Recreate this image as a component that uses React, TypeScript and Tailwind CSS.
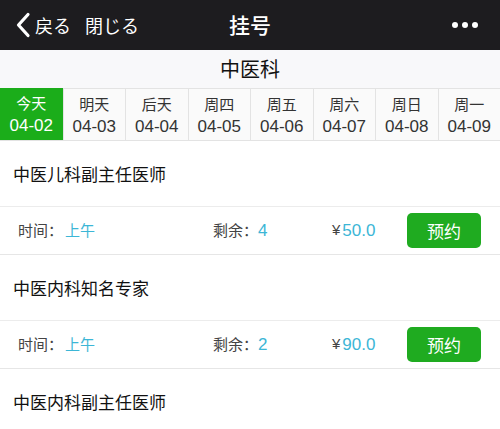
import React from 'react';

const font = { fontFamily: '"Noto Sans CJK SC", "Noto Sans CJK JP", "Noto Sans", sans-serif' };
const latin = { fontFamily: '"Liberation Sans", sans-serif' };

const days = [
  { label: '今天', date: '04-02' },
  { label: '明天', date: '04-03' },
  { label: '后天', date: '04-04' },
  { label: '周四', date: '04-05' },
  { label: '周五', date: '04-06' },
  { label: '周六', date: '04-07' },
  { label: '周日', date: '04-08' },
  { label: '周一', date: '04-09' },
];

const doctors = [
  { title: '中医儿科副主任医师', time: '上午', left: '4', price: '50.0' },
  { title: '中医内科知名专家', time: '上午', left: '2', price: '90.0' },
  { title: '中医内科副主任医师' },
];

const App: React.FC = () => {
  return (
    <div className="w-[500px] h-[429px] overflow-hidden bg-white" style={font}>
      {/* Top bar */}
      <div className="h-[50px] bg-[#1d1c1f] flex items-center text-white relative">
        <div className="flex items-center pl-[15px]">
          <svg width="17" height="26" viewBox="0 0 17 26" fill="none">
            <path d="M13 2.5 L3.5 13 L13 23.5" stroke="white" strokeWidth="3.2" strokeLinecap="round" strokeLinejoin="round" />
          </svg>
          <span className="text-[18px] ml-[3px] leading-none">戻る</span>
          <span className="text-[18px] ml-[14px] leading-none">閉じる</span>
        </div>
        <div className="absolute left-1/2 -translate-x-1/2 text-[21px] font-medium">挂号</div>
        <div className="ml-auto mr-[22px] flex gap-[4px]">
          <span className="w-[6px] h-[6px] rounded-full bg-white" />
          <span className="w-[6px] h-[6px] rounded-full bg-white" />
          <span className="w-[6px] h-[6px] rounded-full bg-white" />
        </div>
      </div>

      {/* Department */}
      <div className="h-[38px] bg-[#f8f8fa] flex items-center justify-center text-[20px] text-[#111]">中医科</div>

      {/* Date tabs */}
      <div className="grid grid-cols-8 h-[53px] border-b border-[#e3e3e3] bg-[#fafafa]">
        {days.map((d, i) => (
          <div
            key={d.date}
            className={`flex flex-col items-center justify-center leading-[23px] ${
              i === 0 ? 'bg-[#1bad1a] text-white' : 'border-l border-t border-[#e3e3e3] text-[#333]'
            }`}
          >
            <span className="text-[15px]">{d.label}</span>
            <span className="text-[17px]" style={latin}>{d.date}</span>
          </div>
        ))}
      </div>

      {/* Doctors */}
      {doctors.map((doc) => (
        <div key={doc.title}>
          <div className="h-[66px] flex items-center pl-[13px] text-[17px] text-[#111] border-b border-[#ececec]">
            {doc.title}
          </div>
          {doc.price && (
            <div className="h-[48px] flex items-center text-[15px] text-[#444] border-b border-[#e6e6e6]">
              <div className="w-[213px] pl-[18px] flex items-center">
                <span>时间：</span>
                <span className="text-[#3cb6d6] ml-[2px]">{doc.time}</span>
              </div>
              <div className="w-[119px] flex items-center">
                <span>剩余：</span>
                <span className="text-[#3cb6d6] text-[17px]" style={latin}>{doc.left}</span>
              </div>
              <div className="w-[75px] flex items-center" style={latin}>
                <span className="text-[15px]">¥</span>
                <span className="text-[#3cb6d6] text-[17px] ml-[2px]">{doc.price}</span>
              </div>
              <button className="w-[74px] h-[35px] rounded-[5px] bg-[#1fab20] text-white text-[17px]">预约</button>
            </div>
          )}
        </div>
      ))}
    </div>
  );
};

export default App;
